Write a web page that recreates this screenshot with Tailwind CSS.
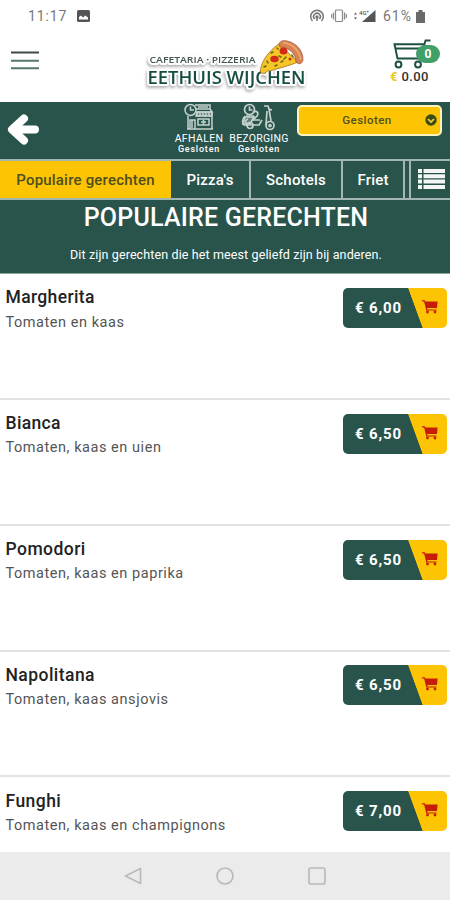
<!DOCTYPE html>
<html lang="nl">
<head>
<meta charset="utf-8">
<title>Eethuis Wijchen</title>
<script src="https://cdn.jsdelivr.net/npm/@tailwindcss/browser@4"></script>
</head>
<body class="w-[450px] h-[900px] overflow-hidden bg-white font-[Roboto,sans-serif] text-[#222] flex flex-col">
<svg class="hidden"><defs>
<symbol id="cart" viewBox="0 0 16 14"><path fill="#c61d08" d="M0 0.3h2.800l.6 1.200H15.600L15 8H5.200l.3 1.400h9v1.200H4.300L2.100 1.600H0z"/><circle cx="5.500" cy="12" r="1.400" fill="#c61d08"/><circle cx="13" cy="12" r="1.400" fill="#c61d08"/></symbol>
</defs></svg>

<!-- Status bar -->
<div class="h-8 shrink-0 flex items-center text-[#777] text-[14px] pl-7 pr-[25px]">
  <span class="tracking-[0.9px]">11:17</span>
  <svg class="ml-[10px]" width="13" height="12" viewBox="0 0 13 12"><rect width="13" height="12" rx="1.5" fill="#555"/><path d="M2 9.500V7l2-1.500 2 2L8.300 5.500 11 7.500v2z" fill="#fff"/></svg>
  <div class="ml-auto flex items-center">
    <svg class="-ml-[3px]" width="16" height="14" viewBox="0 0 16 14" fill="none" stroke="#777" stroke-width="1.500"><path d="M3.500 12A6.300 6.300 0 1 1 12.500 12M5.500 10A3.400 3.400 0 1 1 10.500 10"/><circle cx="8" cy="8" r="1" fill="#777"/><path d="M8 9v3"/></svg>
    <svg class="ml-[6px] mr-[4px]" width="16" height="14" viewBox="0 0 16 14" fill="none" stroke="#888" stroke-width="1.200"><rect x="4.500" y="1" width="7" height="11.500" rx="1"/><path d="M2.500 3.500v7M.7 5v4M13.500 3.500v7M15.300 5v4"/></svg>
    <svg class="ml-[2px]" width="23" height="14" viewBox="0 0 23 14" fill="#555"><path d="M22.500 1v12H9z"/><path d="M1 5.500L2.500 3.500 4 5.500zM1 8.500L2.500 10.500 4 8.500z"/><text x="6" y="5.500" font-size="6" font-family="Roboto" font-weight="500">4G⁺</text></svg>
    <span class="ml-[7px] tracking-[1px]">61%</span>
    <svg class="ml-[4px]" width="9" height="13" viewBox="0 0 9 13"><path d="M0 2h2.500V0h4v2H9v11H0z" fill="#6a6a6a"/></svg>
  </div>
</div>

<!-- Site header -->
<header class="h-[70px] shrink-0 flex items-start pl-[11px]">
  <svg class="mt-[19px] shrink-0" width="28" height="19" viewBox="0 0 28 19"><path d="M0 1.500h28" stroke="#3c4b46" stroke-width="2"/><path d="M0 9.700h28M0 17.300h28" stroke="#56776d" stroke-width="2"/></svg>
  <svg class="mt-[4px] ml-[101px] shrink-0 [&_.title]:drop-shadow-[-1px_2px_1.5px_rgba(0,0,0,0.3)]" width="174" height="60" viewBox="140 36 174 60" font-family="Open Sans, sans-serif">
    <g class="title">
      <text x="149.500" y="62.500" font-size="9.500" font-weight="600" fill="#43544f" stroke="#fff" stroke-width="4" stroke-linejoin="round" paint-order="stroke" textLength="106" lengthAdjust="spacingAndGlyphs">CAFETARIA · PIZZERIA</text>
      <text x="147.500" y="83.500" font-size="18" font-weight="600" fill="#164d43" stroke="#fff" stroke-width="4" stroke-linejoin="round" paint-order="stroke" textLength="158" lengthAdjust="spacingAndGlyphs">EETHUIS WIJCHEN</text>
    </g>
    <path d="M279 44C274 47 264 56 261 67C260 71 260 74 263 73C265 75 267 69 270 71C279 68 289 66 298 62Z" fill="#f6c526" stroke="#9c5a1c" stroke-width=".7"/>
    <path d="M279 45C279 41 283 40 287 41C296 43 303 50 303 60C302 64 299 65 296 62C296 54 289 47 280 47Z" fill="#d98252" stroke="#a04f29" stroke-width=".7"/>
    <path d="M283 42.500C292 44 299 50 301 60" fill="none" stroke="#edaa7b" stroke-width="1.500"/>
    <g fill="#d22b18"><ellipse cx="283.500" cy="51" rx="4" ry="3.500"/><ellipse cx="274.500" cy="59" rx="4.200" ry="3.300"/><circle cx="290" cy="59" r="1.500"/></g>
    <path d="M271 53l2-1M279 56l2 1M286 57l-2 2M267 61l1 2M281 62l2-1M264 67l2-1M292 55l1 2M275 66l2-1M277 48l1 1" stroke="#5f6c19" stroke-width="1.500" stroke-linecap="round"/>
  </svg>
  <div class="mt-[7px] ml-[76px] w-[55px] relative">
    <svg class="ml-[2px]" width="53" height="30" viewBox="0 0 53 30" fill="none" stroke="#1d4f43" stroke-width="2"><path d="M38.500 1.500H33.500L28.500 19.500H5.500L2.500 5.300H32M4 9.500h27" stroke-width="1.900"/><circle cx="6.500" cy="25.500" r="2.900" fill="#fff"/><circle cx="26" cy="25.500" r="2.900" fill="#fff"/></svg>
    <span class="absolute left-[26px] top-[6px] w-[24px] h-[18px] rounded-full bg-[#429f68] text-white text-[12px] font-bold leading-[18px] text-center">0</span>
    <div class="whitespace-nowrap text-[13px] leading-[16px] font-medium text-[#333]"><span class="text-[#e8c81c] font-bold">€</span><span class="ml-[4px] tracking-[0.400px]">0.00</span></div>
  </div>
</header>

<!-- Order options -->
<section class="h-[57px] shrink-0 bg-[#29544c] flex items-start text-white">
  <svg class="ml-[7px] mt-[11px]" width="33" height="33" viewBox="0 0 33 33" fill="none" stroke="#fff" stroke-width="8" stroke-linecap="round" stroke-linejoin="round"><path d="M17 5.500L5 16.500 17 27.500M7 16.500H28"/></svg>
  <div class="ml-[132px] w-[54px] flex flex-col items-center">
    <svg class="mt-px" width="30" height="28" viewBox="0 0 30 28" fill="none" stroke="#c4d1cd" stroke-width="1.500"><path d="M13 9h15v4H12z" fill="#c4d1cd" fill-opacity=".4"/><circle cx="6.500" cy="7" r="5.500"/><path d="M6.500 3.500V7H10M11 2h15v4H12M12 9h16l-2-3M13 9v4h3V9M19 9v4h3V9M25 9v4h3V9M4 13v13h24V14M6 26v-9h5v9M14 16h11v6H14zM17 19h5M19.500 17v5M3 26h26M14 4h10M8 17v8"/></svg>
    <div class="text-[10.500px] leading-[12px] mt-[2px] font-normal tracking-[0.350px]">AFHALEN</div>
    <div class="text-[9px] leading-[10px] -mt-px font-medium tracking-[0.800px]">Gesloten</div>
  </div>
  <div class="ml-[2px] w-[62px] flex flex-col items-center">
    <svg class="mt-px" width="36" height="28" viewBox="0 0 36 28" fill="none" stroke="#c4d1cd" stroke-width="1.700"><path d="M4 14h9l-4 7H2z" fill="#c4d1cd" fill-opacity=".35"/><circle cx="8.500" cy="6.500" r="5"/><path d="M8.500 3.500v3.500h3M12 9c4-2 6 1 4 4l-4 4h7M4 13c-3 3-3 8-1 9h15l3-5M5 13h8M7 16c-3 1-3 4-1 4M23 3h4l1 3 2 12M26 8l-1 14M28 6l3 1"/><circle cx="9" cy="22.500" r="3"/><circle cx="29" cy="22.500" r="4"/><circle cx="29" cy="22.500" r="1"/></svg>
    <div class="text-[10.500px] leading-[12px] mt-[2px] font-normal tracking-[0.250px]">BEZORGING</div>
    <div class="text-[9px] leading-[10px] -mt-px font-medium tracking-[0.800px]">Gesloten</div>
  </div>
  <div class="ml-[7px] mt-[3px] w-[145px] h-[31px] rounded-[5px] border-[2px] border-[#fff2bd] bg-[#fcc402] relative flex items-center justify-center text-[#515020] text-[11.500px] font-medium tracking-[0.450px] pr-[5px]">Gesloten
    <svg class="absolute right-[3px] top-[7px]" width="12" height="12" viewBox="0 0 12 12"><circle cx="6" cy="6" r="5.700" fill="#394c17"/><path d="M3 5l3 3 3-3" fill="none" stroke="#f5d13b" stroke-width="1.700"/></svg>
  </div>
</section>

<!-- Category tabs -->
<nav class="h-[41px] shrink-0 bg-[#29544c] border-y-[2px] border-[#a3b6b1] flex text-white text-[15px] font-medium tracking-[0.200px] whitespace-nowrap">
  <div class="w-[171px] bg-[#fcc402] text-[#4e4f20] flex items-center justify-center pt-px">Populaire gerechten</div>
  <div class="w-[80px] border-r-[2px] border-[#a3b6b1] flex items-center justify-center pt-px">Pizza's</div>
  <div class="w-[92px] border-r-[2px] border-[#a3b6b1] flex items-center justify-center pt-px">Schotels</div>
  <div class="w-[62px] border-r-[2px] border-[#a3b6b1] flex items-center justify-center pt-px">Friet</div>
  <div class="ml-[4px] flex-1 border-l-[2px] border-[#a3b6b1] flex items-center pl-[7px] pb-[2px]">
    <svg width="27" height="20" viewBox="0 0 27 20" fill="#f3f6f5"><path d="M0 0h4v4H0zM5.500 0H27v4H5.500zM0 5.300h4v4H0zM5.500 5.300H27v4H5.500zM0 10.600h4v4H0zM5.500 10.600H27v4H5.500zM0 15.900h4v4H0zM5.500 15.900H27v4H5.500z"/></svg>
  </div>
</nav>

<!-- Category heading -->
<section class="h-[74px] shrink-0 bg-[#29544c] border-b border-[#8fa6a0] text-white text-center pl-[2px]">
  <h1 class="text-[25px] leading-[30px] mt-[3px] font-medium tracking-[0.200px]">POPULAIRE GERECHTEN</h1>
  <p class="text-[12.500px] leading-[16px] mt-[14px] tracking-[0.120px]">Dit zijn gerechten die het meest geliefd zijn bij anderen.</p>
</section>

<!-- Dishes -->
<main class="h-[578px] shrink-0 overflow-hidden">
  <article class="h-[126px] border-b-[2px] border-[#e4e4e4] flex justify-between pl-[5.500px] pr-[3px]">
    <div class="pt-[12px]"><h2 class="text-[17.500px] leading-[22px] font-medium tracking-[0.350px]">Margherita</h2><p class="text-[14.500px] leading-[20px] mt-[5px] text-[#555] tracking-[0.550px]">Tomaten en kaas</p></div>
    <button class="mt-[14px] w-[104px] h-[40px] rounded-[5px] overflow-hidden flex bg-[linear-gradient(70deg,#29544c_0_66.900%,#fcc402_67.500%)] text-white text-[15px] font-bold tracking-[0.850px]"><span class="w-[76px] pl-[12px] text-left leading-[40px] whitespace-nowrap">€ 6,00</span><svg class="mt-[12px] ml-[3px]" width="16" height="14"><use href="#cart"/></svg></button>
  </article>
  <article class="h-[126px] border-b-[2px] border-[#e4e4e4] flex justify-between pl-[5.500px] pr-[3px]">
    <div class="pt-[12px]"><h2 class="text-[17.500px] leading-[22px] font-medium tracking-[0.350px]">Bianca</h2><p class="text-[14.500px] leading-[20px] mt-[4px] text-[#555] tracking-[0.550px]">Tomaten, kaas en uien</p></div>
    <button class="mt-[14px] w-[104px] h-[40px] rounded-[5px] overflow-hidden flex bg-[linear-gradient(70deg,#29544c_0_66.900%,#fcc402_67.500%)] text-white text-[15px] font-bold tracking-[0.850px]"><span class="w-[76px] pl-[12px] text-left leading-[40px] whitespace-nowrap">€ 6,50</span><svg class="mt-[12px] ml-[3px]" width="16" height="14"><use href="#cart"/></svg></button>
  </article>
  <article class="h-[126px] border-b-[2px] border-[#e4e4e4] flex justify-between pl-[5.500px] pr-[3px]">
    <div class="pt-[12px]"><h2 class="text-[17.500px] leading-[22px] font-medium tracking-[0.450px]">Pomodori</h2><p class="text-[14.500px] leading-[20px] mt-[4px] text-[#555] tracking-[0.550px]">Tomaten, kaas en paprika</p></div>
    <button class="mt-[14px] w-[104px] h-[40px] rounded-[5px] overflow-hidden flex bg-[linear-gradient(70deg,#29544c_0_66.900%,#fcc402_67.500%)] text-white text-[15px] font-bold tracking-[0.850px]"><span class="w-[76px] pl-[12px] text-left leading-[40px] whitespace-nowrap">€ 6,50</span><svg class="mt-[12px] ml-[3px]" width="16" height="14"><use href="#cart"/></svg></button>
  </article>
  <article class="h-[125px] border-b-[2px] border-[#e4e4e4] flex justify-between pl-[5.500px] pr-[3px]">
    <div class="pt-[12px]"><h2 class="text-[17.500px] leading-[22px] font-medium tracking-[0.450px]">Napolitana</h2><p class="text-[14.500px] leading-[20px] mt-[4px] text-[#555] tracking-[0.550px]">Tomaten, kaas ansjovis</p></div>
    <button class="mt-[13px] w-[104px] h-[40px] rounded-[5px] overflow-hidden flex bg-[linear-gradient(70deg,#29544c_0_66.900%,#fcc402_67.500%)] text-white text-[15px] font-bold tracking-[0.850px]"><span class="w-[76px] pl-[12px] text-left leading-[40px] whitespace-nowrap">€ 6,50</span><svg class="mt-[12px] ml-[3px]" width="16" height="14"><use href="#cart"/></svg></button>
  </article>
  <article class="flex justify-between pl-[5.500px] pr-[3px]">
    <div class="pt-[13px]"><h2 class="text-[17.500px] leading-[22px] font-medium tracking-[0.450px]">Funghi</h2><p class="text-[14.500px] leading-[20px] mt-[4px] text-[#555] tracking-[0.550px]">Tomaten, kaas en champignons</p></div>
    <button class="mt-[14px] w-[104px] h-[40px] rounded-[5px] overflow-hidden flex bg-[linear-gradient(70deg,#29544c_0_66.900%,#fcc402_67.500%)] text-white text-[15px] font-bold tracking-[0.850px]"><span class="w-[76px] pl-[12px] text-left leading-[40px] whitespace-nowrap">€ 7,00</span><svg class="mt-[12px] ml-[3px]" width="16" height="14"><use href="#cart"/></svg></button>
  </article>
</main>

<!-- System navigation -->
<footer class="h-[48px] shrink-0 bg-[#ebebeb] flex items-center justify-center gap-[74px]">
  <svg width="18" height="18" viewBox="0 0 18 18" fill="none" stroke="#bababa" stroke-width="1.700" stroke-linejoin="round"><path d="M16.500 1.500v15L1.500 9z"/></svg>
  <svg width="18" height="18" viewBox="0 0 18 18" fill="none" stroke="#bababa" stroke-width="1.700"><circle cx="9" cy="9" r="8"/></svg>
  <svg width="18" height="18" viewBox="0 0 18 18" fill="none" stroke="#bababa" stroke-width="1.700"><rect x="1" y="1" width="16" height="16" rx="2"/></svg>
</footer>
</body>
</html>
